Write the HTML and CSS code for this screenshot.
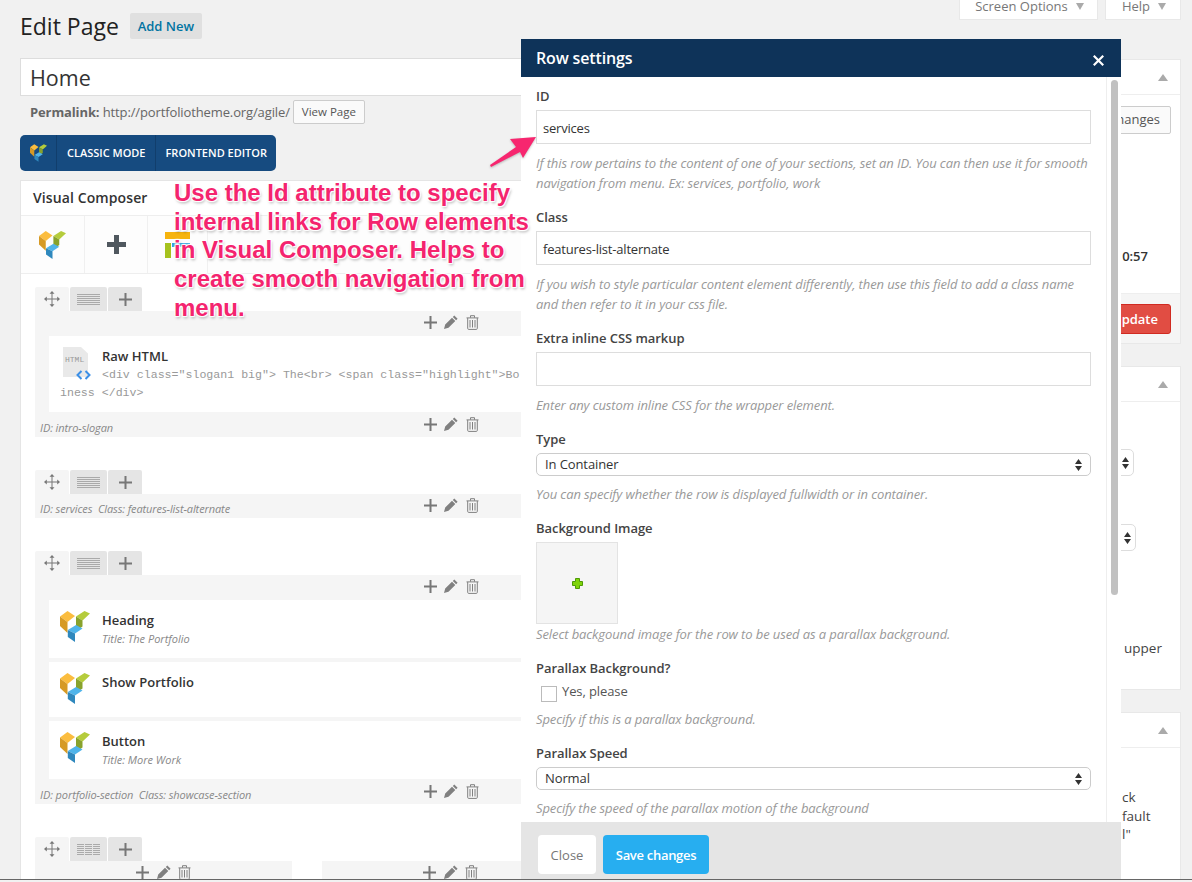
FILE: index.html
```html
<!DOCTYPE html>
<html lang="en">
<head>
<meta charset="utf-8">
<title>Edit Page</title>
<link rel="stylesheet" href="styles.css">
</head>
<body>
<svg class="defs" width="0" height="0" aria-hidden="true">
  <defs>
    <symbol id="i-logo" viewBox="0 0 30 31">
      <polygon fill="#fbbd3f" points="0,5.5 7.5,0 15,5 7.5,11"/>
      <polygon fill="#d69a25" points="0,5.5 7.5,11 7.5,22 0,15"/>
      <polygon fill="#b5cc3c" points="16,5.5 24.5,0 30,2.5 22.5,9.5"/>
      <polygon fill="#88a22c" points="16,5.5 22.5,9.5 22.5,15.5 16,20"/>
      <polygon fill="#4fb4ea" points="7.8,19 16,14 22.5,17.5 15,22.5"/>
      <polygon fill="#2f88bd" points="7.8,19 15,22.5 15,31 7.8,26"/>
    </symbol>
    <symbol id="i-plus" viewBox="0 0 13 13">
      <path fill="currentColor" d="M5.500 0h2v5.500H13v2H7.500V13h-2V7.500H0v-2h5.500z"/>
    </symbol>
    <symbol id="i-plus-big" viewBox="0 0 19 19">
      <path fill="currentColor" d="M7 0h5v7h7v5h-7v7H7v-7H0V7h7z"/>
    </symbol>
    <symbol id="i-pencil" viewBox="0 0 14 14">
      <path fill="currentColor" d="M10.300.4l3.300 3.300-1.500 1.500-3.300-3.300zM8 2.700l3.300 3.300-6.800 6.800L0 14l1.200-4.500z"/>
    </symbol>
    <symbol id="i-trash" viewBox="0 0 13 15">
      <path fill="none" stroke="currentColor" d="M.5 2.900h12M4.500 2.700V.7h4v2M1.700 3v10.400q0 1 1 1h7.600q1 0 1-1V3M4 5v7.500M6.500 5v7.500M9 5v7.500"/>
    </symbol>
    <symbol id="i-move" viewBox="0 0 16 16">
      <path fill="currentColor" d="M8 0l2.500 2.800H8.500v4.700h4.700V5.500L16 8l-2.800 2.500V8.500H8.500v4.700h2L8 16l-2.500-2.800h2V8.500H2.800v2L0 8l2.800-2.500v2h4.700V2.800h-2z"/>
    </symbol>
    <symbol id="i-updown" viewBox="0 0 7 12">
      <path fill="currentColor" d="M3.500 0L7 5H0zM3.500 12L0 7h7z"/>
    </symbol>
  </defs>
</svg>

<div class="page">
  <header class="top">
    <div class="heading">
      <h1 class="heading__title">Edit Page</h1>
      <a class="heading__add">Add New</a>
    </div>
    <div class="meta-tabs">
      <div class="meta-tab meta-tab--wide">Screen Options <span class="meta-tab__arrow"></span></div>
      <div class="meta-tab">Help <span class="meta-tab__arrow"></span></div>
    </div>
  </header>

  <div class="columns">
    <main class="main">
      <div class="title-box">Home</div>
      <div class="permalink">
        <b class="permalink__label">Permalink:</b>&nbsp;<span>http://portfoliotheme.org/agile/</span>
        <span class="btn-view">View Page</span>
      </div>

      <div class="mode-bar">
        <span class="mode-bar__logo"><svg class="logo-small"><use href="#i-logo"/></svg></span>
        <span class="mode-bar__item">CLASSIC MODE</span>
        <span class="mode-bar__item">FRONTEND EDITOR</span>
      </div>

      <section class="composer">
        <div class="composer__head">Visual Composer</div>
        <div class="composer__tools">
          <div class="tool tool--logo"><svg class="logo-large"><use href="#i-logo"/></svg></div>
          <div class="tool tool--plus"><svg class="icon-plus-big"><use href="#i-plus-big"/></svg></div>
          <div class="tool tool--layout"><span class="lay lay--top"></span><span class="lay-row"><span class="lay lay--left"></span><span class="lay lay--right"></span></span></div>
        </div>

        <div class="rows">
          <div class="vc-row">
            <div class="tabs">
              <span class="tab tab--move"><svg class="icon-move"><use href="#i-move"/></svg></span>
              <span class="tab tab--lay"><span class="lines"></span></span>
              <span class="tab"><svg class="icon-plus"><use href="#i-plus"/></svg></span>
            </div>
            <div class="vc-row__body">
              <div class="controls-row">
                <div class="controls"><svg class="icon-plus"><use href="#i-plus"/></svg><svg class="icon-pencil"><use href="#i-pencil"/></svg><svg class="icon-trash"><use href="#i-trash"/></svg></div>
              </div>
              <div class="cards">
                <div class="card card--raw">
                  <div class="card__top">
                    <div class="raw-icon">
                      <span class="raw-icon__text">HTML</span>
                      <svg class="raw-icon__code" viewBox="0 0 15 10"><path fill="none" stroke="#3c8fe6" stroke-width="2" d="M5.500 1L1.500 5l4 4M9.500 1l4 4-4 4"/></svg>
                    </div>
                    <div class="card__text">
                      <div class="card__title">Raw HTML</div>
                      <div class="code">&lt;div class="slogan1 big"&gt; The&lt;br&gt; &lt;span class="highlight"&gt;Bo</div>
                    </div>
                  </div>
                  <div class="code">iness &lt;/div&gt;</div>
                </div>
              </div>
              <div class="row-foot">
                <span class="row-foot__meta">ID: intro-slogan</span>
                <div class="controls"><svg class="icon-plus"><use href="#i-plus"/></svg><svg class="icon-pencil"><use href="#i-pencil"/></svg><svg class="icon-trash"><use href="#i-trash"/></svg></div>
              </div>
            </div>
          </div>

          <div class="vc-row">
            <div class="tabs">
              <span class="tab tab--move"><svg class="icon-move"><use href="#i-move"/></svg></span>
              <span class="tab tab--lay"><span class="lines"></span></span>
              <span class="tab"><svg class="icon-plus"><use href="#i-plus"/></svg></span>
            </div>
            <div class="vc-row__body">
              <div class="row-foot row-foot--empty">
                <span class="row-foot__meta">ID: services&nbsp; Class: features-list-alternate</span>
                <div class="controls"><svg class="icon-plus"><use href="#i-plus"/></svg><svg class="icon-pencil"><use href="#i-pencil"/></svg><svg class="icon-trash"><use href="#i-trash"/></svg></div>
              </div>
            </div>
          </div>

          <div class="vc-row">
            <div class="tabs">
              <span class="tab tab--move"><svg class="icon-move"><use href="#i-move"/></svg></span>
              <span class="tab tab--lay"><span class="lines"></span></span>
              <span class="tab"><svg class="icon-plus"><use href="#i-plus"/></svg></span>
            </div>
            <div class="vc-row__body">
              <div class="controls-row">
                <div class="controls"><svg class="icon-plus"><use href="#i-plus"/></svg><svg class="icon-pencil"><use href="#i-pencil"/></svg><svg class="icon-trash"><use href="#i-trash"/></svg></div>
              </div>
              <div class="cards">
                <div class="card">
                  <div class="card__top">
                    <svg class="logo-card"><use href="#i-logo"/></svg>
                    <div class="card__text"><div class="card__title">Heading</div><div class="card__sub">Title: The Portfolio</div></div>
                  </div>
                </div>
                <div class="card card--short">
                  <div class="card__top">
                    <svg class="logo-card"><use href="#i-logo"/></svg>
                    <div class="card__text"><div class="card__title">Show Portfolio</div></div>
                  </div>
                </div>
                <div class="card">
                  <div class="card__top">
                    <svg class="logo-card"><use href="#i-logo"/></svg>
                    <div class="card__text"><div class="card__title">Button</div><div class="card__sub">Title: More Work</div></div>
                  </div>
                </div>
              </div>
              <div class="row-foot">
                <span class="row-foot__meta">ID: portfolio-section&nbsp; Class: showcase-section</span>
                <div class="controls"><svg class="icon-plus"><use href="#i-plus"/></svg><svg class="icon-pencil"><use href="#i-pencil"/></svg><svg class="icon-trash"><use href="#i-trash"/></svg></div>
              </div>
            </div>
          </div>

          <div class="vc-row">
            <div class="tabs">
              <span class="tab tab--move"><svg class="icon-move"><use href="#i-move"/></svg></span>
              <span class="tab tab--lay"><span class="lines lines--cols"></span></span>
              <span class="tab"><svg class="icon-plus"><use href="#i-plus"/></svg></span>
            </div>
            <div class="col-grid">
              <div class="col"><div class="controls"><svg class="icon-plus"><use href="#i-plus"/></svg><svg class="icon-pencil"><use href="#i-pencil"/></svg><svg class="icon-trash"><use href="#i-trash"/></svg></div></div>
              <div class="col"><div class="controls"><svg class="icon-plus"><use href="#i-plus"/></svg><svg class="icon-pencil"><use href="#i-pencil"/></svg><svg class="icon-trash"><use href="#i-trash"/></svg></div></div>
              <div class="col"><div class="controls"><svg class="icon-plus"><use href="#i-plus"/></svg><svg class="icon-pencil"><use href="#i-pencil"/></svg><svg class="icon-trash"><use href="#i-trash"/></svg></div></div>
            </div>
          </div>
        </div>
      </section>
    </main>

    <aside class="side">
      <section class="panel panel--publish">
        <div class="panel__head"><span class="panel__chev"></span></div>
        <div class="publish">
          <div class="publish__preview"><span class="btn-preview">Preview Changes</span></div>
          <div class="publish__date">Published on: Jul 15, 2014 @ 10:57</div>
        </div>
        <div class="publish__foot"><span class="btn-update">Update</span></div>
      </section>
      <section class="panel panel--attrs">
        <div class="panel__head"><span class="panel__chev"></span></div>
        <div class="side-select side-select--one"><svg class="icon-updown"><use href="#i-updown"/></svg></div>
        <div class="side-select side-select--two"><svg class="icon-updown"><use href="#i-updown"/></svg></div>
        <p class="side-text side-text--upper">upper</p>
      </section>
      <section class="panel panel--last">
        <div class="panel__head"><span class="panel__chev"></span></div>
        <p class="side-text side-text--lines">ck<br>fault<br>l"</p>
      </section>
    </aside>
  </div>
</div>

<div class="modal">
  <div class="modal__head">
    <span class="modal__title">Row settings</span>
    <svg class="modal__close" viewBox="0 0 10 10"><path fill="none" stroke="#fff" stroke-width="2" d="M.7.700l8.600 8.600M9.300.700L.7 9.300"/></svg>
  </div>
  <div class="modal__main">
    <div class="modal__form">
      <div class="field">
        <div class="field__label">ID</div>
        <div class="input">services</div>
        <p class="help">If this row pertains to the content of one of your sections, set an ID. You can then use it for smooth navigation from menu. Ex: services, portfolio, work</p>
      </div>
      <div class="field">
        <div class="field__label">Class</div>
        <div class="input">features-list-alternate</div>
        <p class="help">If you wish to style particular content element differently, then use this field to add a class name and then refer to it in your css file.</p>
      </div>
      <div class="field">
        <div class="field__label">Extra inline CSS markup</div>
        <div class="input"></div>
        <p class="help">Enter any custom inline CSS for the wrapper element.</p>
      </div>
      <div class="field">
        <div class="field__label">Type</div>
        <div class="select"><span class="select__value">In Container</span><svg class="icon-updown"><use href="#i-updown"/></svg></div>
        <p class="help help--tight">You can specify whether the row is displayed fullwidth or in container.</p>
      </div>
      <div class="field">
        <div class="field__label">Background Image</div>
        <div class="upload"><svg class="upload__plus" viewBox="0 0 11 11"><path fill="#7fd40a" stroke="#4e9a06" d="M3.500.5h4v3h3v4h-3v3h-4v-3h-3v-4h3z"/></svg></div>
        <p class="help help--flush">Select backgound image for the row to be used as a parallax background.</p>
      </div>
      <div class="field">
        <div class="field__label">Parallax Background?</div>
        <div class="check"><span class="check__box"></span><span class="check__text">Yes, please</span></div>
        <p class="help help--check">Specify if this is a parallax background.</p>
      </div>
      <div class="field">
        <div class="field__label">Parallax Speed</div>
        <div class="select"><span class="select__value">Normal</span><svg class="icon-updown"><use href="#i-updown"/></svg></div>
        <p class="help help--tight">Specify the speed of the parallax motion of the background</p>
      </div>
    </div>
    <div class="rail"><div class="rail__thumb"></div></div>
  </div>
  <div class="modal__foot">
    <span class="btn-close">Close</span>
    <span class="btn-save">Save changes</span>
  </div>
</div>

<p class="note">Use the Id attribute to specify<br>internal links for Row elements<br>in Visual Composer. Helps to<br>create smooth navigation from<br>menu.</p>
<svg class="arrow" viewBox="0 0 50 36"><polygon fill="#f7266f" points="47,1 21,3 27,11 1,29 2,31 31,16 34,22"/></svg>
<div class="shot-edge"></div>
</body>
</html>
```

FILE: styles.css
```css
* { box-sizing: border-box; }
html, body { height: 100%; }
body {
  margin: 0;
  background: #f1f1f1;
  color: #444;
  font: 13px/20px "Open Sans", sans-serif;
  overflow: hidden;
}
p { margin: 0; }
.defs { position: absolute; }
.page { height: 100vh; padding: 0 11px 0 20px; overflow: hidden; }

/* top */
.top { display: flex; justify-content: space-between; align-items: flex-start; height: 58px; }
.heading { display: flex; align-items: center; gap: 11px; padding-top: 13px; }
.heading__title { margin: 0; font-size: 23px; line-height: 26px; font-weight: 400; color: #222; }
.heading__add { width: 72px; height: 26px; background: #e0e0e0; color: #0074a2; font-size: 13px; font-weight: 600; line-height: 26px; text-align: center; border-radius: 2px; }
.meta-tabs { display: flex; gap: 7px; }
.meta-tab { display: flex; align-items: flex-start; justify-content: center; gap: 8px; width: 76px; height: 20px; padding-left: 2px; background: #fff; border: 1px solid #e8e8e8; border-top: 0; color: #777; font-size: 13px; line-height: 13px; }
.meta-tab--wide { width: 139px; }
.meta-tab__arrow { width: 0; height: 0; margin-top: 3px; border: 4px solid transparent; border-top: 7px solid #aaa; border-bottom: 0; }

.columns { display: grid; grid-template-columns: 861px 280px; gap: 20px; }

/* main */
.title-box { height: 38px; padding-left: 9px; background: #fff; border: 1px solid #ddd; font-size: 21.5px; line-height: 37px; color: #333; }
.permalink { display: flex; align-items: center; height: 24px; margin-top: 4px; padding-left: 10px; color: #666; font-size: 13px; letter-spacing: -.12px; }
.permalink__label { font-weight: 700; }
.btn-view { height: 24px; margin-left: 3px; padding: 0 8px; background: #fafafa; border: 1px solid #ccc; border-radius: 2px; font-size: 11.5px; line-height: 22px; color: #555; letter-spacing: 0; }
.mode-bar { display: flex; width: 256px; height: 36px; margin-top: 11px; background: #164b80; border-radius: 5px; color: #fff; font-size: 11px; font-weight: 600; line-height: 36px; overflow: hidden; }
.mode-bar__logo { display: flex; flex: none; align-items: center; justify-content: center; width: 36px; }
.mode-bar__item { flex: none; padding: 0 9px 0 10px; border-left: 1px solid #113e6c; white-space: nowrap; }
.logo-small { width: 17px; height: 18px; }

.composer { height: 720px; margin-top: 9px; background: #fff; border: 1px solid #e5e5e5; border-bottom: 0; overflow: hidden; }
.composer__head { height: 35px; padding-left: 12px; border-bottom: 1px solid #eee; font-size: 14px; font-weight: 600; line-height: 33px; color: #333; letter-spacing: .1px; }
.composer__tools { display: flex; height: 58px; margin-bottom: -1px; border-bottom: 1px solid #eee; background: #fdfdfd; }
.tool { display: flex; align-items: center; justify-content: center; height: 100%; border-right: 1px solid #f0f0f0; }
.tool--logo { width: 64px; }
.tool--plus { width: 63px; }
.tool--layout { flex-direction: column; align-items: flex-start; justify-content: flex-start; gap: 4px; width: 60px; padding: 16px 0 0 17px; }
.logo-large { width: 27px; height: 30px; }
.icon-plus-big { width: 19px; height: 19px; color: #50585f; }
.lay { display: block; }
.lay--top { width: 25px; height: 7px; background: #f6b40e; }
.lay-row { display: flex; gap: 1px; }
.lay--left { width: 6px; height: 15px; background: #a6c21e; }
.lay--right { width: 18px; height: 4px; background: #2fa8df; }

.rows { display: flex; flex-direction: column; gap: 33px; padding: 14px 13px 0 14px; }
.tabs { display: flex; gap: 1px; height: 24px; }
.tab { display: flex; align-items: center; justify-content: center; width: 34px; background: #e5e5e5; color: #888; border-radius: 2px 2px 0 0; }
.tab--move { background: #f5f5f5; }
.tab--lay { width: 37px; }
.icon-move { width: 16px; height: 16px; color: #777; }
.icon-plus { width: 13px; height: 13px; color: #777; }
.icon-pencil { width: 14px; height: 14px; color: #808080; }
.icon-trash { width: 13px; height: 15px; color: #808080; }
.lines { width: 23px; height: 11px; background: repeating-linear-gradient(to bottom, #aaa 0 1px, #e5e5e5 1px 2px); }
.lines--cols { background: repeating-linear-gradient(to right, transparent 0 7px, #e5e5e5 7px 8px), repeating-linear-gradient(to bottom, #aaa 0 1px, #e5e5e5 1px 2px); }

.vc-row__body { background: #f5f5f5; }
.controls-row { display: flex; justify-content: center; height: 25px; padding-top: 3px; }
.controls { display: flex; align-items: center; justify-content: center; gap: 7.5px; height: 16px; }
.cards { display: flex; flex-direction: column; gap: 4px; padding: 0 14px; }
.card { height: 58px; padding: 10px 11px 0; background: #fff; }
.card--short { height: 55px; }
.card--raw { height: 76px; }
.card__top { display: flex; gap: 12px; }
.card__text { min-width: 0; flex: 1; }
.card__title { font-size: 13px; font-weight: 600; line-height: 20px; color: #333; }
.card__sub { margin-top: -1px; font-size: 11px; font-style: italic; line-height: 20px; color: #888; }
.logo-card { flex: none; width: 30px; height: 31px; margin-top: 1px; }
.code { height: 18px; font: 11.6px/18px "Liberation Mono", monospace; color: #999; white-space: nowrap; overflow: hidden; }
.raw-icon { position: relative; flex: none; width: 30px; height: 30px; margin-top: 1px; }
.raw-icon::before { content: ""; position: absolute; left: 3px; top: 0; width: 25px; height: 30px; background: #e9e9e9; clip-path: polygon(0 0, 72% 0, 100% 22%, 100% 100%, 0 100%); }
.raw-icon__text { position: absolute; left: 5px; top: 7px; font: 8px/12px "Liberation Mono", monospace; color: #999; }
.raw-icon__code { position: absolute; left: 16px; top: 23px; width: 15px; height: 10px; }

.row-foot { display: grid; grid-template-columns: 1fr auto 1fr; height: 25px; padding: 4px 5px 0; }
.row-foot--empty { height: 24px; padding-top: 3px; }
.row-foot__meta { margin-top: 3px; font-size: 11px; font-style: italic; line-height: 18px; color: #888; white-space: nowrap; letter-spacing: -.1px; }

.col-grid { display: grid; grid-template-columns: repeat(3, 1fr); gap: 30px; }
.col { height: 60px; padding-top: 3px; background: #f5f5f5; }

/* side */
.side { display: flex; flex-direction: column; gap: 22px; margin-top: 1px; }
.panel { background: #fff; border: 1px solid #e8e8e8; }
.panel__head { display: flex; justify-content: flex-end; align-items: center; height: 35px; padding-right: 12px; border-bottom: 1px solid #eee; }
.panel__chev { width: 0; height: 0; border: 5px solid transparent; border-bottom: 7px solid #aaa; border-top: 0; }
.panel--publish { height: 285px; }
.publish { height: 198px; padding: 11px 9px 0 0; }
.publish__preview { display: flex; justify-content: flex-end; }
.btn-preview { height: 28px; padding: 0 10px; background: #fafafa; border: 1px solid #ccc; border-radius: 2px; font-size: 13px; line-height: 24px; color: #555; }
.publish__date { margin-top: 112px; padding-right: 23px; text-align: right; font-weight: 600; color: #333; }
.publish__foot { display: flex; justify-content: flex-end; height: 50px; padding: 10px 9px 0 0; background: #f5f5f5; border-top: 1px solid #eee; }
.btn-update { height: 30px; padding: 0 12px; background: #e14d43; border: 1px solid #d02a21; border-radius: 3px; color: #fff; font-size: 13px; font-weight: 600; line-height: 28px; }
.panel--attrs { height: 324px; }
.side-select { display: flex; align-items: center; justify-content: flex-end; height: 27px; padding-right: 4px; background: #fff; border: 1px solid #ddd; border-radius: 5px; }
.side-select--one { margin: 47px 46px 0 0; }
.side-select--two { margin: 48px 44px 0 0; }
.side-text { color: #444; font-size: 13.5px; line-height: 18.500px; }
.side-text--upper { margin-top: 88px; padding-left: 222px; }
.panel--last { height: 240px; }
.side-text--lines { margin-top: 40px; padding-left: 220px; }
.icon-updown { width: 7px; height: 12px; color: #333; }

/* modal */
.modal { position: absolute; left: 521px; top: 39px; display: flex; flex-direction: column; width: 600px; height: 841px; background: #fff; }
.modal__head { display: flex; align-items: center; justify-content: space-between; flex: none; height: 38px; padding: 0 17px 0 15px; background: #0e3359; color: #fff; }
.modal__title { font-size: 16px; font-weight: 600; letter-spacing: -.15px; }
.modal__close { width: 11px; height: 11px; margin-top: 4px; }
.modal__main { display: flex; flex: 1; min-height: 0; overflow: hidden; }
.modal__form { flex: 1; min-width: 0; padding: 9px 15px 0; }
.rail { flex: none; width: 15px; padding: 3px 3px 0 4px; border-left: 1px solid #eee; }
.rail__thumb { height: 515px; background: #c1c1c1; border-radius: 4px; }
.field { margin-bottom: 14px; }
.field__label { margin-bottom: 4px; font-size: 13px; font-weight: 600; line-height: 20px; color: #444; letter-spacing: -.05px; }
.input { height: 34px; padding-left: 6px; border: 1px solid #ddd; font-size: 13px; letter-spacing: -.2px; line-height: 34px; color: #333; }
.select { display: flex; align-items: center; justify-content: space-between; height: 23px; padding: 0 8px; border: 1px solid #ccc; border-radius: 5px; font-size: 13px; letter-spacing: -.1px; color: #333; }
.select__value { margin-top: -2px; }
.help { margin-top: 9px; font-size: 13px; font-style: italic; letter-spacing: -.1px; line-height: 20px; color: #999; }
.help--tight { margin-top: 8px; }
.help--flush { margin-top: 0; }
.help--check { margin-top: 7px; }
.upload { display: flex; align-items: center; justify-content: center; width: 82px; height: 82px; background: #f5f5f5; border: 1px solid #e3e3e3; }
.upload__plus { width: 11px; height: 11px; }
.check { display: flex; align-items: center; gap: 5px; height: 20px; padding-left: 5px; font-size: 13px; letter-spacing: -.1px; color: #555; }
.check__box { width: 16px; height: 16px; margin-top: 3px; background: #fff; border: 1px solid #bbb; }
.check__text { margin-top: -2px; }
.modal__foot { display: flex; gap: 7px; flex: none; height: 58px; padding: 13px 17px 0; background: #e5e5e5; }
.btn-close, .btn-save { height: 39px; border-radius: 4px; font-size: 13px; line-height: 40px; text-align: center; }
.btn-close { width: 58px; background: #fff; color: #777; }
.btn-save { width: 106px; background: #27aef0; color: #fff; font-weight: 600; letter-spacing: -.3px; }

/* annotation */
.note { position: absolute; left: 174px; top: 179px; font: 700 24px/28.700px "Liberation Sans", sans-serif; color: #f4246e; text-shadow: 0 0 2px #fff, 1px 1px 1px #fff, -1px -1px 1px #fff, 1px -1px 1px #fff, -1px 1px 1px #fff, 1px 2px 3px rgba(0,0,0,.35); white-space: nowrap; }
.arrow { position: absolute; left: 489px; top: 136px; width: 50px; height: 36px; filter: drop-shadow(0 1px 1px rgba(0,0,0,.25)); }
.shot-edge { position: fixed; left: 0; right: 0; bottom: 0; height: 3px; background: #f1f1f1; border-top: 1px solid #666; }
```
